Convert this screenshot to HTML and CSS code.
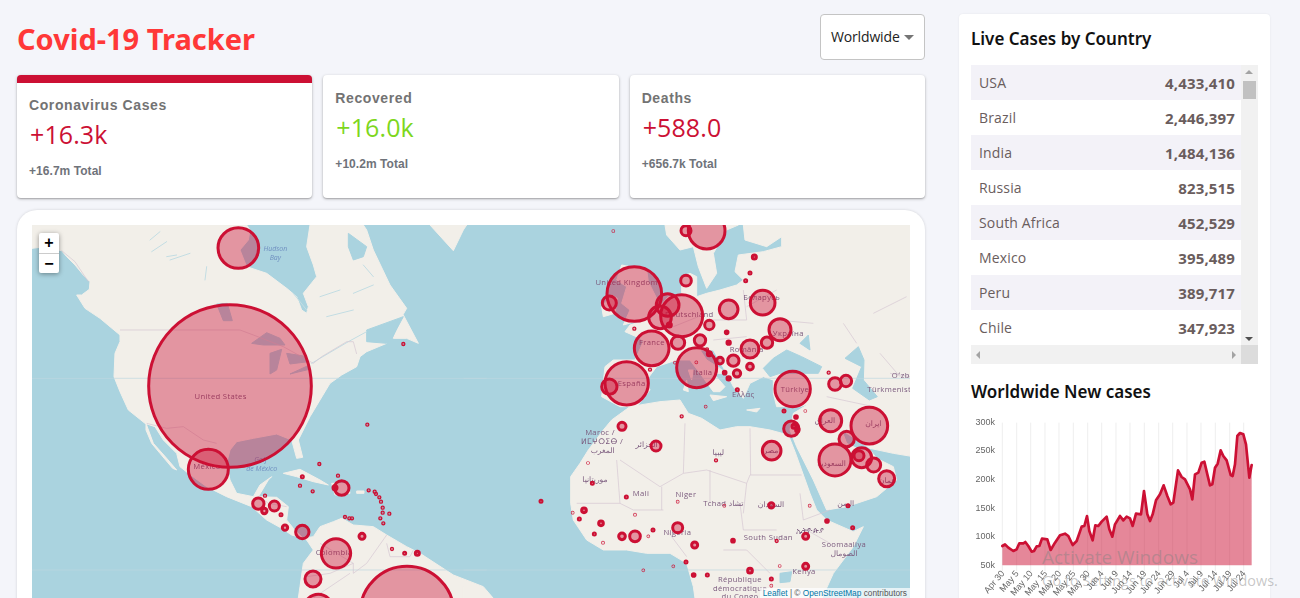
FILE: index.html
```html
<!DOCTYPE html>
<html lang="en">
<head>
<meta charset="utf-8">
<title>Covid-19 Tracker</title>
<link rel="stylesheet" href="styles.css">
</head>
<body>
<div class="app">
  <main class="left">
    <header class="header">
      <h1 class="brand">Covid-19 Tracker</h1>
      <div class="select">Worldwide<span class="caret"></span></div>
    </header>
    <section class="stats">
      <article class="stat stat-active">
        <div class="stat-label">Coronavirus Cases</div>
        <div class="stat-value red">+16.3k</div>
        <div class="stat-total">+16.7m Total</div>
      </article>
      <article class="stat">
        <div class="stat-label">Recovered</div>
        <div class="stat-value green">+16.0k</div>
        <div class="stat-total">+10.2m Total</div>
      </article>
      <article class="stat">
        <div class="stat-label">Deaths</div>
        <div class="stat-value red">+588.0</div>
        <div class="stat-total">+656.7k Total</div>
      </article>
    </section>
    <section class="map-card">
      <div class="map">
        <svg class="map-svg" viewBox="0 0 878 400" width="878" height="400">
          <g transform="translate(-12 -15) scale(.33333)">
            <path class="land" d="M36 115L60 112 90 115 125 122 140 140 165 165 190 195 210 215 208 238 185 255 170 255 195 295 240 325 270 350 300 375 300 395 285 430 282 500 300 545 325 600 375 640 405 650 430 690 470 730 480 770 505 790 560 830 620 860 695 890 740 930 785 955 815 975 850 985 820 955 800 930 805 890 770 862 715 860 745 810 755 800 720 825 700 860 650 850 630 810 620 760 630 720 650 695 700 685 770 672 815 690 830 745 848 742 835 690 870 620 900 570 930 520 965 495 1010 470 1020 440 1040 425 1100 400 1160 295 1110 225 1060 120 1040 60 1030 45 870 45 860 110 880 165 890 200 850 250 865 290 860 310 845 300 830 260 800 235 740 190 680 170 660 120 685 90 690 60 680 45 36 45Z"/>
            <path class="land" d="M378 640L400 700 440 745 470 780 458 775 420 730 395 700 378 660ZM850 985L880 980 900 950 940 935 965 925 1000 945 1060 950 1100 975 1160 1010 1200 1030 1300 1095 1390 1130 1450 1200 1450 1300 820 1300 835 1164 840 1130 850 1060 880 1020 860 990ZM1230 45L1300 122 1330 60 1340 45ZM1120 385L1150 315 1195 400 1160 385ZM790 790L840 778 900 810 925 825 880 815 830 800ZM935 820L985 820 990 850 945 855ZM1010 843L1032 843 1032 850 1010 850Z"/>
            <path class="water" d="M695 400L740 368 780 385 795 405 730 405ZM750 430L785 418 770 480 750 492ZM800 430L850 438 865 455 810 462ZM810 492L862 468 868 478ZM590 282L622 280 637 332 610 332ZM985 70L1040 110 1030 140 1000 150 985 110ZM1040 360L1150 320 1115 385 1100 400 1040 395Z"/>
            <path class="river" d="M1040 365L985 395 900 445 875 460M450 150L510 130M560 170L555 210M440 140L470 135M390 90L420 65M900 260L960 240M920 320L1000 300M1000 250L1060 225M1030 165L1060 200M820 250L860 300M395 125L440 95"/>
            <path class="border" d="M36 505H1400M36 1080H1400"/>
            <path class="line" d="M300 360H660L700 375 790 410 880 460 905 440 980 395 1000 395 1010 432M380 640L440 655 490 650 550 690 590 700M125 122L165 155 205 215M900 1000L1000 1060 1000 1090 1040 1060 1100 975M1100 1000L1110 1040 1170 1040 1180 1020M860 1100L930 1090 1000 1060M720 860L745 880 800 890M880 1164L990 1090"/>
            <text class="sea" x="766" y="124">Hudson</text><text class="sea" x="766" y="151">Bay</text>
            <text class="sea" x="722" y="756">Golf</text><text class="sea" x="725" y="782">de México</text>
            <text class="lbl" x="602" y="566">United States</text>
            <text class="lbl" x="561" y="776">México</text>
            <text class="lbl" x="942" y="1036">Colombia</text>
            <circle class="c" cx="655" cy="114" r="61"/><circle class="c" cx="630" cy="528" r="244"/><circle class="c" cx="565" cy="778" r="60"/>
            <circle class="c" cx="965" cy="834" r="22"/><circle class="c" cx="945" cy="833" r="6"/><circle class="c" cx="715" cy="881" r="17"/><circle class="c" cx="733" cy="903" r="8"/><circle class="c" cx="763" cy="888" r="15"/><circle class="c" cx="795" cy="953" r="8"/><circle class="c" cx="847" cy="966" r="20"/><circle class="c" cx="948" cy="1030" r="44"/><circle class="c" cx="1026" cy="979" r="9"/><circle class="c" cx="879" cy="1107" r="24"/><circle class="c" cx="895" cy="1195" r="42"/><circle class="c" cx="1161" cy="1210" r="141"/>
            <circle class="c" cx="1150" cy="402" r="2"/><circle class="c" cx="1042" cy="644" r="2"/><circle class="c" cx="898" cy="762" r="2"/><circle class="c" cx="847" cy="800" r="3"/><circle class="c" cx="840" cy="827" r="2"/><circle class="c" cx="878" cy="844" r="2"/><circle class="c" cx="954" cy="797" r="2"/><circle class="c" cx="735" cy="857" r="2"/><circle class="c" cx="783" cy="914" r="3"/><circle class="c" cx="1046" cy="841" r="2"/><circle class="c" cx="1064" cy="845" r="2"/><circle class="c" cx="1068" cy="852" r="2"/><circle class="c" cx="1078" cy="862" r="2"/><circle class="c" cx="1083" cy="875" r="2"/><circle class="c" cx="1088" cy="893" r="2"/><circle class="c" cx="1088" cy="908" r="2"/><circle class="c" cx="1108" cy="911" r="2"/><circle class="c" cx="1081" cy="925" r="2"/><circle class="c" cx="1090" cy="940" r="2"/><circle class="c" cx="975" cy="921" r="2"/><circle class="c" cx="988" cy="925" r="2"/><circle class="c" cx="996" cy="925" r="2"/><circle class="c" cx="1116" cy="1017" r="2"/><circle class="c" cx="1154" cy="1030" r="3"/><circle class="c" cx="1192" cy="1030" r="6"/>
          </g>
          <g transform="translate(448 -15) scale(.33333)">
            <path class="land" d="M1300 45L790 45 795 90 860 110 905 80 905 110 850 125 775 135 765 185 790 210 770 225 720 240 680 250 650 260 650 200 630 190 605 200 605 255 565 260 530 300 515 325 450 345 435 365 480 385 490 395 465 450 400 450 375 470 365 560 420 590 470 590 510 540 500 510 530 470 590 450 630 450 660 490 700 545 720 545 735 530 700 490 735 490 720 475 680 450 660 420 700 420 740 490 760 530 790 565 810 520 850 500 880 510 880 550 890 590 960 590 990 580 940 610 930 660 950 710 1000 810 1040 900 1100 890 1190 860 1250 810 1240 770 1190 745 1170 720 1140 720 1100 700 1085 660 1170 715 1240 730 1300 740Z"/>
            <path class="land" d="M555 45L560 75 600 120 640 110 655 170 680 235 710 190 700 130 740 60 775 45ZM272 800L300 760 325 720 370 660 395 630 450 590 540 575 600 570 625 610 665 625 720 660 770 650 810 650 870 660 925 675 945 725 990 850 1010 900 1040 930 1120 965 1150 950 1120 1010 1060 1090 1010 1200 650 1200 640 1130 620 1060 570 1030 500 1030 440 1020 370 1020 320 990 280 930 272 880ZM425 165L500 180 505 215 530 265 530 300 515 320 430 345 450 300 425 280 440 230 410 210ZM365 290L395 255 412 265 405 310 370 320ZM-50 1130L0 1130 45 1170 -50 1170ZM620 510L625 545 610 540ZM690 555L740 560 700 572ZM800 600L840 595 830 606ZM625 480L640 480 635 510Z"/>
            <path class="water" d="M850 475L880 445 920 420 965 440 1025 470 1015 490 900 490 870 500ZM1095 445L1135 410 1152 450 1150 510 1192 560 1168 570 1118 535 1145 470ZM960 400L985 375 990 420ZM900 1090L935 1085 930 1115 900 1118Z"/>
            <path class="line" d="M410 750L420 880 290 880M420 750L540 830 610 790 680 780 800 820 810 795 965 795M545 830L545 900M690 780L690 880M800 820L790 910M615 640L610 790M810 655L812 795M780 880L790 960 890 960M420 880L460 900 550 900M560 960L620 1040M960 850L970 930 1050 900M980 960L1050 1000M730 1020L800 1020 870 1090M1180 310L1280 260M1040 560L1180 590M1230 490L1290 500M1200 430L1260 500M680 330L800 330 790 240M890 330L1000 340M800 290L890 240M700 390L800 380M580 350L680 310M1090 340L1130 400"/>
            <path class="border" d="M-50 505H1300M-50 1080H1300"/>
            <text class="lbl" x="440" y="226">United Kingdom</text><text class="lbl" x="628" y="322">Deutschland</text><text class="lbl" x="516" y="406">France</text><text class="lbl" x="455" y="529">España</text><text class="lbl" x="668" y="495">Italia</text><text class="lbl" x="845" y="271">Беларусь</text><text class="lbl" x="925" y="379">Україна</text><text class="lbl" x="800" y="426">România</text><text class="lbl" x="945" y="545">Türkiye</text><text class="lbl" x="790" y="560">Ελλάς</text><text class="lbl" x="360" y="675">Maroc /</text><text class="lbl" x="366" y="702">ⵍⵎⵖⵔⵉⴱ /</text><text class="lbl" x="368" y="729">المغرب</text><text class="lbl" x="500" y="710">الجزائر</text><text class="lbl" x="715" y="735">ليبيا</text><text class="lbl" x="873" y="729">مصر</text><text class="lbl" x="345" y="815">موريتانيا</text><text class="lbl" x="483" y="859">Mali</text><text class="lbl" x="618" y="860">Niger</text><text class="lbl" x="730" y="887">Tchad تشاد</text><text class="lbl" x="873" y="890">السودان</text><text class="lbl" x="1097" y="888">اليمن</text><text class="lbl" x="592" y="974">Nigeria</text><text class="lbl" x="865" y="989">South Sudan</text><text class="lbl" x="990" y="970">ኢትዮጵያ</text><text class="lbl" x="1092" y="1010">Soomaaliya</text><text class="lbl" x="1092" y="1037">الصومال</text><text class="lbl" x="972" y="1092">Kenya</text><text class="lbl" x="780" y="1115">République</text><text class="lbl" x="780" y="1142">démocratique</text><text class="lbl" x="780" y="1166">du Congo</text><text class="lbl" x="1180" y="649">ایران</text><text class="lbl" x="1035" y="639">العراق</text><text class="lbl" x="1055" y="767">السعودية</text><text class="lbl" x="1222" y="819">عمان</text><text class="lbl lbl-start" x="1235" y="505">Oʻzb</text><text class="lbl lbl-start" x="1162" y="545">Türkmenist</text>
            <circle class="c" cx="618" cy="62" r="15"/><circle class="c" cx="680" cy="62" r="55"/><circle class="c" cx="823" cy="141" r="6"/><circle class="c" cx="810" cy="189" r="3"/><circle class="c" cx="797" cy="212" r="3"/><circle class="c" cx="618" cy="212" r="16"/><circle class="c" cx="463" cy="252" r="82"/><circle class="c" cx="388" cy="279" r="21"/><circle class="c" cx="605" cy="317" r="63"/><circle class="c" cx="563" cy="285" r="34"/><circle class="c" cx="540" cy="322" r="34"/><circle class="c" cx="568" cy="345" r="6"/><circle class="c" cx="463" cy="356" r="2"/><circle class="c" cx="515" cy="415" r="52"/><circle class="c" cx="594" cy="398" r="20"/><circle class="c" cx="660" cy="391" r="17"/><circle class="c" cx="688" cy="345" r="14"/><circle class="c" cx="746" cy="298" r="28"/><circle class="c" cx="848" cy="278" r="37"/><circle class="c" cx="900" cy="359" r="33"/><circle class="c" cx="740" cy="367" r="4"/><circle class="c" cx="746" cy="398" r="5"/><circle class="c" cx="810" cy="417" r="27"/><circle class="c" cx="861" cy="398" r="17"/><circle class="c" cx="760" cy="452" r="17"/><circle class="c" cx="720" cy="452" r="10"/><circle class="c" cx="688" cy="431" r="6"/><circle class="c" cx="681" cy="418" r="2"/><circle class="c" cx="650" cy="473" r="60"/><circle class="c" cx="649" cy="457" r="1"/><circle class="c" cx="810" cy="470" r="10"/><circle class="c" cx="771" cy="490" r="11"/><circle class="c" cx="734" cy="488" r="4"/><circle class="c" cx="746" cy="505" r="5"/><circle class="c" cx="772" cy="539" r="3"/><circle class="c" cx="440" cy="520" r="65"/><circle class="c" cx="388" cy="530" r="23"/><circle class="c" cx="510" cy="479" r="2"/><circle class="c" cx="585" cy="458" r="1"/><circle class="c" cx="938" cy="537" r="53"/><circle class="c" cx="1065" cy="522" r="19"/><circle class="c" cx="1098" cy="513" r="17"/><circle class="c" cx="1046" cy="488" r="2"/><circle class="c" cx="912" cy="603" r="3"/><circle class="c" cx="976" cy="603" r="1"/><circle class="c" cx="677" cy="590" r="1"/><circle class="c" cx="605" cy="619" r="2"/><circle class="c" cx="948" cy="621" r="4"/><circle class="c" cx="934" cy="656" r="23"/><circle class="c" cx="942" cy="649" r="6"/><circle class="c" cx="952" cy="660" r="5"/><circle class="c" cx="1052" cy="632" r="33"/><circle class="c" cx="1168" cy="647" r="55"/><circle class="c" cx="1100" cy="687" r="23"/><circle class="c" cx="1065" cy="750" r="48"/><circle class="c" cx="1145" cy="743" r="30"/><circle class="c" cx="1137" cy="737" r="15"/><circle class="c" cx="1181" cy="765" r="21"/><circle class="c" cx="1220" cy="806" r="24"/><circle class="c" cx="426" cy="649" r="12"/><circle class="c" cx="528" cy="708" r="15"/><circle class="c" cx="708" cy="751" r="2"/><circle class="c" cx="875" cy="722" r="28"/><circle class="c" cx="324" cy="759" r="1"/><circle class="c" cx="337" cy="820" r="3"/><circle class="c" cx="183" cy="874" r="3"/><circle class="c" cx="439" cy="861" r="3"/><circle class="c" cx="593" cy="875" r="1"/><circle class="c" cx="733" cy="887" r="1"/><circle class="c" cx="874" cy="886" r="8"/><circle class="c" cx="989" cy="887" r="1"/><circle class="c" cx="1104" cy="887" r="3"/><circle class="c" cx="312" cy="901" r="7"/><circle class="c" cx="278" cy="908" r="1"/><circle class="c" cx="298" cy="927" r="3"/><circle class="c" cx="363" cy="940" r="7"/><circle class="c" cx="465" cy="914" r="1"/><circle class="c" cx="519" cy="960" r="3"/><circle class="c" cx="593" cy="953" r="15"/><circle class="c" cx="426" cy="979" r="10"/><circle class="c" cx="465" cy="979" r="16"/><circle class="c" cx="343" cy="972" r="3"/><circle class="c" cx="369" cy="998" r="1"/><circle class="c" cx="505" cy="979" r="1"/><circle class="c" cx="644" cy="1005" r="9"/><circle class="c" cx="759" cy="992" r="4"/><circle class="c" cx="890" cy="993" r="2"/><circle class="c" cx="977" cy="979" r="9"/><circle class="c" cx="1041" cy="933" r="4"/><circle class="c" cx="1118" cy="953" r="3"/><circle class="c" cx="618" cy="1056" r="3"/><circle class="c" cx="580" cy="1069" r="1"/><circle class="c" cx="490" cy="1081" r="1"/><circle class="c" cx="641" cy="1095" r="4"/><circle class="c" cx="682" cy="1095" r="3"/><circle class="c" cx="810" cy="1082" r="7"/><circle class="c" cx="874" cy="1107" r="3"/><circle class="c" cx="874" cy="1127" r="1"/><circle class="c" cx="899" cy="1068" r="1"/><circle class="c" cx="977" cy="1069" r="9"/><circle class="c" cx="400" cy="63" r="1"/>
          </g>
        </svg>
        <div class="zoom">
          <div class="zoom-btn">+</div>
          <div class="zoom-btn">−</div>
        </div>
        <div class="attribution"><span class="link">Leaflet</span> | © <span class="link">OpenStreetMap</span> contributors</div>
      </div>
    </section>
  </main>
  <aside class="side">
    <h3 class="side-title">Live Cases by Country</h3>
    <div class="table-wrap">
      <div class="table-body">
        <table class="table">
          <tr><td>USA</td><td class="num">4,433,410</td></tr>
          <tr><td>Brazil</td><td class="num">2,446,397</td></tr>
          <tr><td>India</td><td class="num">1,484,136</td></tr>
          <tr><td>Russia</td><td class="num">823,515</td></tr>
          <tr><td>South Africa</td><td class="num">452,529</td></tr>
          <tr><td>Mexico</td><td class="num">395,489</td></tr>
          <tr><td>Peru</td><td class="num">389,717</td></tr>
          <tr><td>Chile</td><td class="num">347,923</td></tr>
        </table>
        <div class="vbar">
          <span class="arrow arrow-up"></span>
          <span class="thumb"></span>
          <span class="arrow arrow-down"></span>
        </div>
      </div>
      <div class="hbar">
        <div class="htrack">
          <span class="arrow arrow-left"></span>
          <span class="arrow arrow-right"></span>
        </div>
        <div class="corner"></div>
      </div>
    </div>
    <h3 class="side-title chart-title">Worldwide New cases</h3>
    <svg class="chart" viewBox="971 404 287 194" width="287" height="194">
      <g transform="translate(960 400) scale(.33333)">
        <path class="grid" d="M127 65V510M170 65V510M212 65V510M255 65V510M297 65V510M340 65V510M383 65V510M425 65V510M468 65V510M510 65V510M553 65V510M596 65V510M638 65V510M681 65V510M723 65V510M766 65V510M809 65V510M851 65V510"/>
        <polygon class="area" points="127,493 127,435 135,430 145,440 160,450 170,445 178,427 190,427 196,423 205,435 215,452 222,450 230,436 238,435 246,413 262,415 272,447 285,425 300,403 315,398 325,405 338,432 350,420 365,377 373,375 381,345 388,390 398,418 406,373 415,375 425,362 440,347 448,385 457,407 465,370 480,345 490,358 500,347 510,352 518,375 528,338 543,340 552,270 562,340 570,360 578,340 588,298 600,280 611,253 622,285 632,310 640,305 654,208 665,228 675,235 690,265 697,295 705,220 715,215 725,185 733,182 742,220 750,253 757,250 765,200 773,188 782,148 790,165 800,178 812,222 818,225 825,190 832,105 840,96 850,100 858,130 868,230 875,192 875,493"/>
        <polyline class="trend" points="127,435 135,430 145,440 160,450 170,445 178,427 190,427 196,423 205,435 215,452 222,450 230,436 238,435 246,413 262,415 272,447 285,425 300,403 315,398 325,405 338,432 350,420 365,377 373,375 381,345 388,390 398,418 406,373 415,375 425,362 440,347 448,385 457,407 465,370 480,345 490,358 500,347 510,352 518,375 528,338 543,340 552,270 562,340 570,360 578,340 588,298 600,280 611,253 622,285 632,310 640,305 654,208 665,228 675,235 690,265 697,295 705,220 715,215 725,185 733,182 742,220 750,253 757,250 765,200 773,188 782,148 790,165 800,178 812,222 818,225 825,190 832,105 840,96 850,100 858,130 868,230 875,192"/>
        <text class="ytick" x="105" y="72">300k</text><text class="ytick" x="105" y="157">250k</text><text class="ytick" x="105" y="243">200k</text><text class="ytick" x="105" y="329">150k</text><text class="ytick" x="105" y="414">100k</text><text class="ytick" x="105" y="500">50k</text>
        <text class="xtick" transform="translate(135 518) rotate(-50)">Apr 30</text><text class="xtick" transform="translate(178 518) rotate(-50)">May 5</text><text class="xtick" transform="translate(220 518) rotate(-50)">May 10</text><text class="xtick" transform="translate(263 518) rotate(-50)">May 15</text><text class="xtick" transform="translate(305 518) rotate(-50)">May 20</text><text class="xtick" transform="translate(348 518) rotate(-50)">May 25</text><text class="xtick" transform="translate(391 518) rotate(-50)">May 30</text><text class="xtick" transform="translate(433 518) rotate(-50)">Jun 4</text><text class="xtick" transform="translate(476 518) rotate(-50)">Jun 9</text><text class="xtick" transform="translate(518 518) rotate(-50)">Jun 14</text><text class="xtick" transform="translate(561 518) rotate(-50)">Jun 19</text><text class="xtick" transform="translate(604 518) rotate(-50)">Jun 24</text><text class="xtick" transform="translate(646 518) rotate(-50)">Jun 29</text><text class="xtick" transform="translate(689 518) rotate(-50)">Jul 4</text><text class="xtick" transform="translate(731 518) rotate(-50)">Jul 9</text><text class="xtick" transform="translate(774 518) rotate(-50)">Jul 14</text><text class="xtick" transform="translate(817 518) rotate(-50)">Jul 19</text><text class="xtick" transform="translate(859 518) rotate(-50)">Jul 24</text>
      </g>
    </svg>
  </aside>
</div>
<div class="activation">
  <div class="activation-title">Activate Windows</div>
  <div class="activation-sub">Go to Settings to activate Windows.</div>
</div>
</body>
</html>
```
FILE: styles.css
```css
html, body {
  margin: 0;
  height: 100%;
  overflow: hidden;
}
body {
  background: #f4f5fa;
  font-family: "Open Sans", "Noto Sans", sans-serif;
  position: relative;
}
.app {
  display: flex;
  gap: 34px;
  padding: 14px 0 0 17px;
  align-items: flex-start;
}
.left {
  width: 908px;
  flex: none;
}
.header {
  display: flex;
  justify-content: space-between;
  align-items: center;
  height: 46px;
  margin-bottom: 15px;
}
.brand {
  margin: 4px 0 0;
  color: #ff3838;
  font-family: "Noto Sans", sans-serif;
  font-size: 29px;
  font-weight: 700;
  line-height: 46px;
}
.select {
  box-sizing: border-box;
  width: 105px;
  height: 46px;
  background: #fff;
  border: 1px solid #c4c4c4;
  border-radius: 4px;
  padding: 0 0 2px 10px;
  display: flex;
  align-items: center;
  font-size: 14px;
  color: #222;
  letter-spacing: -.15px;
}
.caret {
  width: 0;
  height: 0;
  margin: 3px 0 0 4px;
  border-left: 5px solid transparent;
  border-right: 5px solid transparent;
  border-top: 5px solid #757575;
}
.stats {
  display: flex;
  gap: 11px;
  margin-bottom: 12px;
}
.stat {
  flex: 1;
  box-sizing: border-box;
  height: 123px;
  background: #fff;
  border-radius: 4px;
  box-shadow: 0 1px 3px rgba(0,0,0,.3), 0 1px 1px rgba(0,0,0,.1);
  padding: 15px 12px;
}
.stat-active {
  border-top: 8px solid #cc1034;
  padding-top: 14px;
}
.stat-label {
  font-family: "Liberation Sans", sans-serif;
  font-size: 14px;
  font-weight: 700;
  line-height: 17px;
  letter-spacing: .6px;
  color: #737373;
}
.stat-value {
  font-size: 25px;
  line-height: 34px;
  margin-top: 3px;
  padding-left: 1px;
  letter-spacing: .1px;
}
.red { color: #cc1034; }
.green { color: #7dd71d; }
.stat-total {
  font-family: "Liberation Sans", sans-serif;
  font-size: 12px;
  font-weight: 700;
  line-height: 16px;
  letter-spacing: .05px;
  color: #6f737a;
  margin-top: 12px;
}
.map-card {
  background: #fff;
  border-radius: 20px;
  padding: 15px;
  box-shadow: 0 0 3px rgba(0,0,0,.15);
}
.map {
  position: relative;
  height: 400px;
  overflow: hidden;
  background: #aad3df;
}
.map-svg {
  display: block;
  filter: blur(.4px);
}
.land {
  fill: #f2efe9;
  stroke: #f2efe9;
  stroke-width: 3;
  stroke-linejoin: round;
}
.water {
  fill: #aad3df;
  stroke: #aad3df;
  stroke-width: 3;
  stroke-linejoin: round;
}
.river {
  fill: none;
  stroke: #c3dde3;
  stroke-width: 3;
  stroke-linecap: round;
}
.border {
  fill: none;
  stroke: #bcd8df;
  stroke-width: 2;
}
.line {
  fill: none;
  stroke: #d4c6d2;
  stroke-width: 2;
}
.lbl {
  font-family: "Open Sans", "DejaVu Sans", "Noto Sans", sans-serif;
  font-size: 23px;
  fill: #7b5b7e;
  text-anchor: middle;
  letter-spacing: 1px;
}
.lbl-start {
  text-anchor: start;
}
.sea {
  font-family: "Open Sans", sans-serif;
  font-style: italic;
  font-size: 21px;
  fill: #6f8fc0;
  text-anchor: middle;
}
.c {
  fill: #cc1034;
  fill-opacity: .4;
  stroke: #cc1034;
  stroke-width: 9;
}
.zoom {
  position: absolute;
  left: 7px;
  top: 8px;
  width: 20px;
  background: #fff;
  border-radius: 2px;
  box-shadow: 0 1px 5px rgba(0,0,0,.4);
}
.zoom-btn {
  height: 20px;
  line-height: 19px;
  text-align: center;
  font-family: "Liberation Sans", sans-serif;
  font-size: 16px;
  font-weight: 700;
  color: #000;
}
.zoom-btn + .zoom-btn {
  border-top: 1px solid #ccc;
  box-sizing: border-box;
}
.attribution {
  position: absolute;
  right: 0;
  top: 363px;
  height: 12px;
  line-height: 11px;
  padding: 0 3px 0 3px;
  background: rgba(255,255,255,.7);
  font-family: "Liberation Sans", sans-serif;
  font-size: 8.3px;
  color: #555;
}
.link { color: #0078a8; }
.side {
  box-sizing: border-box;
  width: 311px;
  height: 640px;
  flex: none;
  background: #fff;
  border-radius: 4px;
  padding: 12px;
  box-shadow: 0 0 2px rgba(0,0,0,.08);
}
.side-title {
  margin: 0;
  font-family: "Noto Sans", sans-serif;
  font-size: 17px;
  font-weight: 600;
  line-height: 26px;
  color: #111;
}
.table-wrap {
  width: 287px;
  margin-top: 13px;
}
.table-body {
  display: flex;
  height: 280px;
}
.table {
  width: 270px;
  height: 280px;
  border-collapse: collapse;
  color: #6a5d5d;
  font-size: 14px;
  letter-spacing: .15px;
}
.table tr { height: 35px; }
.table tr:nth-of-type(odd) { background: #f3f2f8; }
.table td { padding: 0 8px; }
.table td.num {
  text-align: right;
  font-size: 15px;
  font-weight: 700;
  padding-right: 6px;
}
.vbar {
  position: relative;
  width: 17px;
  background: #f1f1f1;
}
.thumb {
  position: absolute;
  left: 2px;
  top: 16px;
  width: 13px;
  height: 18px;
  background: #c1c1c1;
}
.arrow {
  position: absolute;
  width: 0;
  height: 0;
}
.arrow-up {
  left: 4px;
  top: 5px;
  border-left: 4px solid transparent;
  border-right: 4px solid transparent;
  border-bottom: 4px solid #a3a3a3;
}
.arrow-down {
  left: 4px;
  bottom: 4px;
  border-left: 4px solid transparent;
  border-right: 4px solid transparent;
  border-top: 4px solid #505050;
}
.hbar {
  display: flex;
  height: 19px;
}
.htrack {
  position: relative;
  width: 270px;
  background: #f1f1f1;
}
.corner {
  width: 17px;
  background: #dcdcdc;
}
.arrow-left {
  left: 5px;
  top: 6px;
  border-top: 4px solid transparent;
  border-bottom: 4px solid transparent;
  border-right: 4px solid #a3a3a3;
}
.arrow-right {
  right: 5px;
  top: 6px;
  border-top: 4px solid transparent;
  border-bottom: 4px solid transparent;
  border-left: 4px solid #a3a3a3;
}
.chart-title {
  margin-top: 15px;
}
.chart {
  display: block;
  filter: blur(.4px);
}
.grid {
  stroke: #e6e6e6;
  stroke-width: 2;
  fill: none;
}
.area {
  fill: #cc1034;
  fill-opacity: .5;
}
.trend {
  fill: none;
  stroke: #cc1034;
  stroke-width: 8;
  stroke-linejoin: round;
  stroke-linecap: round;
}
.ytick,
.xtick {
  font-family: "Liberation Sans", sans-serif;
  font-size: 27px;
  fill: #666;
  text-anchor: end;
}
.activation {
  position: absolute;
  left: 1042px;
  top: 543px;
  color: rgba(130,130,130,.45);
  pointer-events: none;
  white-space: nowrap;
}
.activation-title {
  font-size: 19px;
  line-height: 28px;
}
.activation-sub {
  font-size: 14.4px;
  line-height: 20px;
}
```
